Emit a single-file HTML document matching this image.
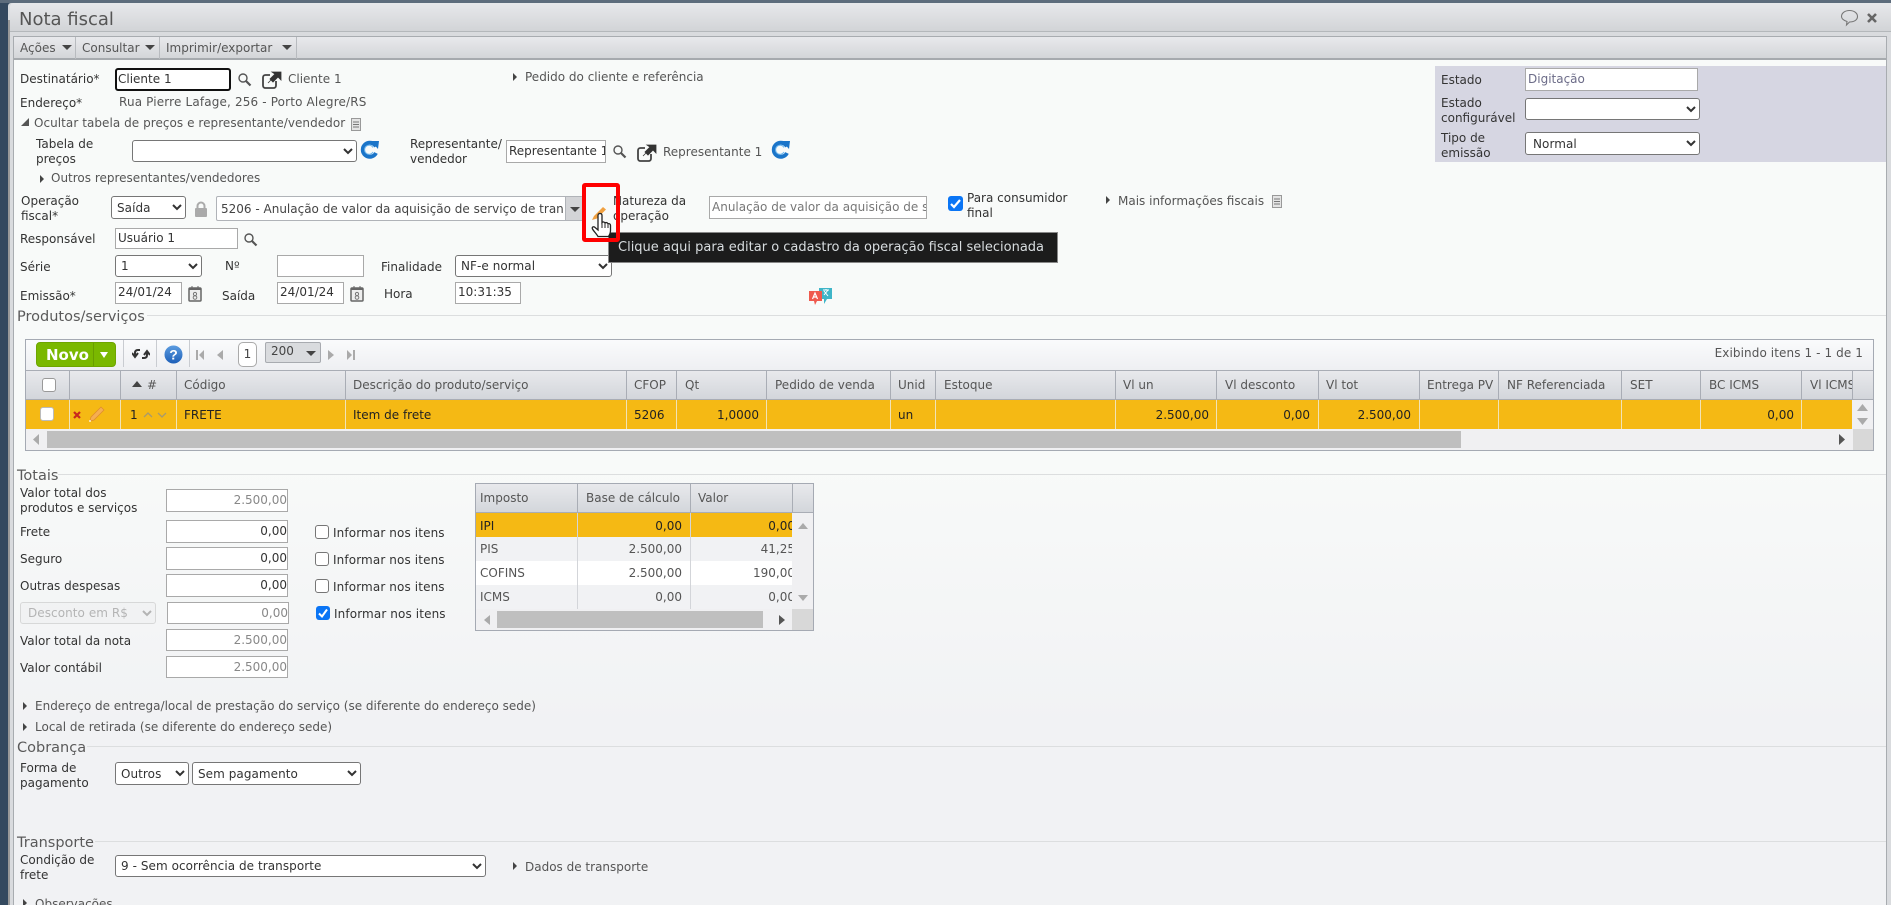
<!DOCTYPE html>
<html lang="pt-BR"><head><meta charset="utf-8"><title>Nota fiscal</title>
<style>
html,body{margin:0;padding:0;width:1891px;height:905px;overflow:hidden;background:#34495f}
#p{position:absolute;left:0;top:0;width:1891px;height:905px;overflow:hidden;font:12px/16px "DejaVu Sans","Liberation Sans",sans-serif;color:#333}
.a,.l,.h,.c,.r,.tr,.td,input,select,svg{position:absolute}
.l,.h,.c,.r{white-space:nowrap}
.l{color:#333}
.h{color:#555;top:377px;height:16px}
.c{color:#222;top:407px}
.r{color:#222;top:407px;text-align:right}
input,select{box-sizing:border-box;margin:0;font:12px "DejaVu Sans","Liberation Sans",sans-serif;color:#333;background:#fff}
input{border:1px solid #a9a9a9;padding:0 0 2px 2px;outline:0}
select{border:1px solid #767676;border-radius:3px;padding:0 0 0 1px;letter-spacing:.06px}
.n{text-align:right;padding:0 0 1px 0}
.tr{width:0;height:0;border-left:4px solid #444;border-top:4px solid transparent;border-bottom:4px solid transparent}
.sec{color:#5a5a5a;font-size:14.500px}
.ln{position:absolute;height:1px;background:#dcdedf}
.sp{position:absolute;width:1px;background:#a9adb5}
.sy{position:absolute;width:1px;background:#f1e3b6}
.cb{position:absolute;box-sizing:border-box;width:14px;height:14px;background:#fff;border:1px solid #767676;border-radius:3px}
</style></head><body>
<div id="p">
<!-- window -->
<div class="a" style="left:0;top:0;width:1891px;height:3px;background:#5d6c7c"></div>
<div class="a" style="left:8px;top:3px;width:1883px;height:902px;background:#d9dbde;border-radius:3px 3px 0 0"></div>
<div class="a" style="left:8px;top:20px;width:2px;height:885px;background:#999"></div>
<div class="a" style="left:10px;top:3px;width:1881px;height:29px;background:linear-gradient(#e7e8eb,#d2d4d7);border-bottom:1px solid #b4b8bb;box-sizing:border-box;border-radius:4px 0 0 0"></div>
<div class="l" style="left:19px;top:9px;font-size:18px;line-height:22px;color:#555">Nota fiscal</div>
<svg style="left:1840px;top:9px" width="20" height="18" viewBox="0 0 20 18"><path d="M9.500 1.500c4.500 0 8 2.500 8 6s-3.500 5.500-8 5.500l-3 3 .5-3.500C4 11.500 1.500 10 1.500 7.500c0-3.500 3.500-6 8-6z" fill="none" stroke="#777" stroke-width="1.100"/></svg>
<svg style="left:1866px;top:12px" width="12" height="12" viewBox="0 0 12 12"><path d="M2 2l8 8M10 2l-8 8" stroke="#666" stroke-width="2.600"/></svg>
<!-- inner panel -->
<div class="a" style="left:13px;top:36px;width:1874px;height:869px;box-sizing:border-box;border:1px solid #a8acb0;border-bottom:0;background:linear-gradient(#f8faf9 0,#f8faf9 420px,#f1f2f4 690px,#f1f2f4 100%)"></div>
<div class="a" style="left:14px;top:37px;width:1872px;height:23px;box-sizing:border-box;background:linear-gradient(#e8e9ec,#d4d6d9);border-bottom:2px solid #a6aaae"></div>
<div class="l" style="left:20px;top:40px;color:#555">Ações</div><div class="a" style="left:62px;top:45px;border:4px solid transparent;border-top:5px solid #444;border-left-width:5px;border-right-width:5px;border-bottom:0"></div>
<div class="sp" style="left:75px;top:37px;height:22px;background:#b8bbbf"></div>
<div class="l" style="left:82px;top:40px;color:#555">Consultar</div><div class="a" style="left:145px;top:45px;border:4px solid transparent;border-top:5px solid #444;border-left-width:5px;border-right-width:5px;border-bottom:0"></div>
<div class="sp" style="left:159px;top:37px;height:22px;background:#b8bbbf"></div>
<div class="l" style="left:166px;top:40px;color:#555">Imprimir/exportar</div><div class="a" style="left:282px;top:45px;border:4px solid transparent;border-top:5px solid #444;border-left-width:5px;border-right-width:5px;border-bottom:0"></div>
<div class="sp" style="left:296px;top:37px;height:22px;background:#b8bbbf"></div>

<!-- header form -->
<div class="l" style="left:20px;top:71px">Destinatário*</div>
<input value="Cliente 1" style="left:115px;top:68px;width:116px;height:23px;border:2px solid #111;border-radius:3px;padding:0 0 2px 1px">
<svg style="left:237px;top:72px" width="15" height="15" viewBox="0 0 15 15"><circle cx="6" cy="6" r="4" fill="none" stroke="#555" stroke-width="1.400"/><path d="M9 9l4.500 4.500" stroke="#555" stroke-width="2.200"/></svg>
<svg style="left:262px;top:71px" width="20" height="18" viewBox="0 0 20 18"><path d="M8 4H3.500C2 4 1 5 1 6.500v8C1 16 2 17 3.500 17h8c1.500 0 2.500-1 2.500-2.500V10" fill="none" stroke="#444" stroke-width="1.800"/><path d="M6 12l8-8M10 1h9v8l-3-3-5 5-3-3 5-5z" fill="#333" stroke="#333" stroke-width=".8"/></svg>
<div class="l" style="left:288px;top:71px;color:#555">Cliente 1</div>
<div class="tr" style="left:513px;top:73px"></div><div class="l" style="left:525px;top:69px;color:#555">Pedido do cliente e referência</div>

<div class="l" style="left:20px;top:95px">Endereço*</div>
<div class="l" style="left:119px;top:94px;color:#555;letter-spacing:.15px">Rua Pierre Lafage, 256 - Porto Alegre/RS</div>

<svg style="left:21px;top:118px" width="8" height="8"><path d="M8 0v8H0z" fill="#555"/></svg>
<div class="l" style="left:34px;top:115px;color:#555;letter-spacing:.05px">Ocultar tabela de preços e representante/vendedor</div>
<svg style="left:350px;top:118px" width="12" height="13" viewBox="0 0 12 13"><path d="M1.500 .5h9v12h-9z" fill="#e4e4e4" stroke="#999"/><path d="M3 4h6M3 6.500h6M3 9h6" stroke="#777"/></svg>

<div class="l" style="left:36px;top:136px">Tabela de</div><div class="l" style="left:36px;top:151px">preços</div>
<select style="left:132px;top:140px;width:225px;height:22px"><option></option></select>
<svg style="left:360px;top:140px" width="19" height="19" viewBox="0 0 19 19"><path d="M16 6.500A7 7 0 1 0 16 13" fill="none" stroke="#1b75c9" stroke-width="4"/><path d="M11 1l8 0-1 8z" fill="#1b75c9"/><path d="M13 7.500A4.500 4.500 0 1 0 13 12" fill="none" stroke="#6fb7ee" stroke-width="1"/></svg>
<div class="l" style="left:410px;top:136px">Representante/</div><div class="l" style="left:410px;top:151px">vendedor</div>
<input value="Representante 1" style="left:506px;top:140px;width:100px;height:23px">
<svg style="left:612px;top:144px" width="15" height="15" viewBox="0 0 15 15"><circle cx="6" cy="6" r="4" fill="none" stroke="#555" stroke-width="1.400"/><path d="M9 9l4.500 4.500" stroke="#555" stroke-width="2.200"/></svg>
<svg style="left:637px;top:144px" width="20" height="18" viewBox="0 0 20 18"><path d="M8 4H3.500C2 4 1 5 1 6.500v8C1 16 2 17 3.500 17h8c1.500 0 2.500-1 2.500-2.500V10" fill="none" stroke="#444" stroke-width="1.800"/><path d="M6 12l8-8M10 1h9v8l-3-3-5 5-3-3 5-5z" fill="#333" stroke="#333" stroke-width=".8"/></svg>
<div class="l" style="left:663px;top:144px;color:#555">Representante 1</div>
<svg style="left:771px;top:140px" width="19" height="19" viewBox="0 0 19 19"><path d="M16 6.500A7 7 0 1 0 16 13" fill="none" stroke="#1b75c9" stroke-width="4"/><path d="M11 1l8 0-1 8z" fill="#1b75c9"/><path d="M13 7.500A4.500 4.500 0 1 0 13 12" fill="none" stroke="#6fb7ee" stroke-width="1"/></svg>

<div class="tr" style="left:40px;top:175px"></div><div class="l" style="left:51px;top:170px;color:#555">Outros representantes/vendedores</div>

<div class="l" style="left:21px;top:193px">Operação</div><div class="l" style="left:21px;top:208px">fiscal*</div>
<select style="left:111px;top:196px;width:75px;height:23px"><option>Saída</option></select>
<svg style="left:194px;top:201px" width="14" height="16" viewBox="0 0 14 16"><path d="M3.500 7V5a3.500 3.500 0 0 1 7 0v2" fill="none" stroke="#aaa" stroke-width="2"/><rect x="1" y="7" width="12" height="9" rx="1" fill="#aaa"/></svg>
<div class="a" style="left:216px;top:196px;width:367px;height:25px;box-sizing:border-box;background:#fff;border:1px solid #b0b3b8;border-radius:2px"></div>
<div class="a" style="left:565px;top:197px;width:18px;height:23px;background:#d3d4d7;border-left:1px solid #b0b3b8;box-sizing:border-box"></div>
<div class="a" style="left:570px;top:207px;border:4px solid transparent;border-top:5px solid #444;border-left-width:5px;border-right-width:5px;border-bottom:0"></div>
<div class="l" style="left:221px;top:201px;width:343px;overflow:hidden;color:#444">5206 - Anulação de valor da aquisição de serviço de transporte</div>

<div class="l" style="left:613px;top:193px">Natureza da</div><div class="l" style="left:613px;top:208px">operação</div>
<input value="Anulação de valor da aquisição de serviço" style="left:709px;top:196px;width:218px;height:23px;color:#777">
<div class="cb" style="left:948px;top:196px;width:15px;height:15px;background:#0a75f5;border:0"></div>
<svg style="left:948px;top:196px" width="15" height="15" viewBox="0 0 15 15"><path d="M3 8l3 3 6-7" fill="none" stroke="#fff" stroke-width="2.200"/></svg>
<div class="l" style="left:967px;top:190px">Para consumidor</div><div class="l" style="left:967px;top:205px">final</div>
<div class="tr" style="left:1106px;top:196px"></div><div class="l" style="left:1118px;top:193px;color:#555">Mais informações fiscais</div>
<svg style="left:1271px;top:195px" width="12" height="13" viewBox="0 0 12 13"><path d="M1.500 .5h9v12h-9z" fill="#e4e4e4" stroke="#999"/><path d="M3 4h6M3 6.500h6M3 9h6" stroke="#777"/></svg>

<div class="l" style="left:20px;top:231px">Responsável</div>
<input value="Usuário 1" style="left:115px;top:228px;width:123px;height:21px">
<svg style="left:243px;top:232px" width="15" height="15" viewBox="0 0 15 15"><circle cx="6" cy="6" r="4" fill="none" stroke="#555" stroke-width="1.400"/><path d="M9 9l4.500 4.500" stroke="#555" stroke-width="2.200"/></svg>

<div class="l" style="left:20px;top:259px">Série</div>
<select style="left:115px;top:255px;width:87px;height:22px"><option>1</option></select>
<div class="l" style="left:225px;top:258px">Nº</div>
<input style="left:277px;top:255px;width:87px;height:22px">
<div class="l" style="left:381px;top:259px">Finalidade</div>
<select style="left:455px;top:255px;width:157px;height:22px"><option>NF-e normal</option></select>

<div class="l" style="left:20px;top:288px">Emissão*</div>
<input value="24/01/24" style="left:115px;top:282px;width:67px;height:22px">
<svg style="left:188px;top:286px" width="14" height="16" viewBox="0 0 14 16"><rect x="1" y="2" width="12" height="13" rx="1" fill="#eee" stroke="#666" stroke-width="1.500"/><path d="M1 2h12v2H1z" fill="#666"/><path d="M4 0v3M10 0v3" stroke="#666"/><circle cx="7" cy="8" r="1.600" fill="none" stroke="#777"/><circle cx="7" cy="11.500" r="1.800" fill="none" stroke="#777"/></svg>
<div class="l" style="left:222px;top:288px">Saída</div>
<input value="24/01/24" style="left:277px;top:282px;width:67px;height:22px">
<svg style="left:350px;top:286px" width="14" height="16" viewBox="0 0 14 16"><rect x="1" y="2" width="12" height="13" rx="1" fill="#eee" stroke="#666" stroke-width="1.500"/><path d="M1 2h12v2H1z" fill="#666"/><path d="M4 0v3M10 0v3" stroke="#666"/><circle cx="7" cy="8" r="1.600" fill="none" stroke="#777"/><circle cx="7" cy="11.500" r="1.800" fill="none" stroke="#777"/></svg>
<div class="l" style="left:384px;top:286px">Hora</div>
<input value="10:31:35" style="left:455px;top:282px;width:66px;height:22px">
<svg style="left:808px;top:287px" width="25" height="19" viewBox="0 0 25 19"><path d="M11 1h13v11h-5l-3 5v-5h-5z" fill="#3fb5c8"/><path d="M1 4h13v10H9l-2 4-1-4H1z" fill="#ef5a4e"/><path d="M4.500 12l2.500-6 2.500 6M5.500 10h3" fill="none" stroke="#fff" stroke-width="1.200"/><path d="M15 3h6M18 2v1M16 8l4-5M16 4l4 5" fill="none" stroke="#fff" stroke-width="1"/></svg>

<!-- Estado panel -->
<div class="a" style="left:1435px;top:66px;width:451px;height:96px;background:#d6d6e2"></div>
<div class="l" style="left:1441px;top:72px">Estado</div>
<input value="Digitação" style="left:1525px;top:68px;width:173px;height:23px;color:#6c6c88">
<div class="l" style="left:1441px;top:95px">Estado</div><div class="l" style="left:1441px;top:110px">configurável</div>
<select style="left:1525px;top:98px;width:175px;height:22px"><option></option></select>
<div class="l" style="left:1441px;top:130px">Tipo de</div><div class="l" style="left:1441px;top:145px">emissão</div>
<select style="left:1525px;top:132px;width:175px;height:23px;padding-left:3px"><option>Normal</option></select>

<!-- Produtos -->
<div class="l sec" style="left:17px;top:309px">Produtos/serviços</div>
<div class="ln" style="left:147px;top:315px;width:1739px"></div>
<div class="a" style="left:25px;top:339px;width:1849px;height:112px;box-sizing:border-box;border:1px solid #a5aab3;background:#f0f0f2"></div>
<div class="a" style="left:26px;top:340px;width:1847px;height:30px;background:linear-gradient(#fafbfc,#eeeff2)"></div>
<div class="a" style="left:36px;top:342px;width:80px;height:25px;background:#7ab800;border-radius:4px;border:1px solid #6ea500;box-sizing:border-box"></div>
<div class="a" style="left:93px;top:343px;width:1px;height:23px;background:#699e00"></div>
<div class="l" style="left:46px;top:347px;font-weight:bold;font-size:15px;color:#fff">Novo</div>
<div class="a" style="left:100px;top:352px;border:4px solid transparent;border-top:6px solid #fff;border-bottom:0"></div>
<div class="sp" style="left:123px;top:340px;height:27px;background:#c9ccd1"></div>
<svg style="left:132px;top:346px" width="18" height="16" viewBox="0 0 18 16"><path d="M8 4H6C4 4 3 5 3 7v3M0 7l3 4 3-4M10 12h2c2 0 3-1 3-3V6M12 9l3-4 3 4" fill="none" stroke="#333" stroke-width="2"/></svg>
<div class="sp" style="left:156px;top:340px;height:27px;background:#c9ccd1"></div>
<svg style="left:164px;top:345px" width="19" height="19" viewBox="0 0 19 19"><defs><linearGradient id="hg" x1="0" y1="0" x2="0" y2="1"><stop offset="0" stop-color="#5b9ce0"/><stop offset="1" stop-color="#1d5fb8"/></linearGradient></defs><circle cx="9.500" cy="9.500" r="9" fill="url(#hg)"/><text x="9.500" y="14.500" text-anchor="middle" fill="#fff" font-family="Liberation Sans, sans-serif" font-weight="bold" font-size="14">?</text></svg>
<div class="sp" style="left:189px;top:340px;height:27px;background:#c9ccd1"></div>
<svg style="left:196px;top:349px" width="8" height="12" viewBox="0 0 8 12"><path d="M1 1v10" stroke="#aaa" stroke-width="2"/><path d="M8 1v10L3 6z" fill="#aaa"/></svg>
<svg style="left:217px;top:349px" width="6" height="12" viewBox="0 0 6 12"><path d="M6 1v10L0 6z" fill="#aaa"/></svg>
<div class="a" style="left:238px;top:342px;width:19px;height:25px;box-sizing:border-box;background:#fff;border:1px solid #aaa;border-radius:5px;text-align:center;line-height:23px;color:#444">1</div>
<div class="a" style="left:265px;top:342px;width:56px;height:21px;box-sizing:border-box;background:#d9dbde;border:1px solid #a8abb0;border-radius:2px;line-height:17px;padding-left:5px;color:#444">200</div>
<div class="a" style="left:306px;top:351px;border:5px solid transparent;border-top:5px solid #444;border-left-width:5px;border-right-width:5px;border-bottom:0"></div>
<svg style="left:328px;top:349px" width="6" height="12" viewBox="0 0 6 12"><path d="M0 1v10l6-5z" fill="#aaa"/></svg>
<svg style="left:347px;top:349px" width="8" height="12" viewBox="0 0 8 12"><path d="M0 1v10l5-5z" fill="#aaa"/><path d="M7 1v10" stroke="#aaa" stroke-width="2"/></svg>
<div class="a" style="left:1660px;top:345px;width:203px;text-align:right;color:#555;letter-spacing:.1px">Exibindo itens 1 - 1 de 1</div>

<!-- grid header -->
<div class="a" style="left:26px;top:370px;width:1847px;height:30px;box-sizing:border-box;background:linear-gradient(#e8e9ec,#d3d6db);border-top:1px solid #a9adb5;border-bottom:1px solid #a9adb5"></div>
<div class="sp" style="left:69px;top:371px;height:29px"></div><div class="sp" style="left:120px;top:371px;height:29px"></div><div class="sp" style="left:176px;top:371px;height:29px"></div><div class="sp" style="left:345px;top:371px;height:29px"></div><div class="sp" style="left:626px;top:371px;height:29px"></div><div class="sp" style="left:676px;top:371px;height:29px"></div><div class="sp" style="left:766px;top:371px;height:29px"></div><div class="sp" style="left:890px;top:371px;height:29px"></div><div class="sp" style="left:935px;top:371px;height:29px"></div><div class="sp" style="left:1115px;top:371px;height:29px"></div><div class="sp" style="left:1216px;top:371px;height:29px"></div><div class="sp" style="left:1318px;top:371px;height:29px"></div><div class="sp" style="left:1419px;top:371px;height:29px"></div><div class="sp" style="left:1498px;top:371px;height:29px"></div><div class="sp" style="left:1621px;top:371px;height:29px"></div><div class="sp" style="left:1700px;top:371px;height:29px"></div><div class="sp" style="left:1801px;top:371px;height:29px"></div><div class="sp" style="left:1852px;top:371px;height:29px"></div>
<div class="cb" style="left:42px;top:378px;border-color:#999"></div>
<div class="a" style="left:132px;top:381px;border:5px solid transparent;border-bottom:6px solid #444;border-top:0"></div>
<div class="h" style="left:147px">#</div>
<div class="h" style="left:184px">Código</div><div class="h" style="left:353px">Descrição do produto/serviço</div><div class="h" style="left:634px">CFOP</div><div class="h" style="left:685px">Qt</div><div class="h" style="left:775px">Pedido de venda</div><div class="h" style="left:898px">Unid</div><div class="h" style="left:944px">Estoque</div><div class="h" style="left:1123px">Vl un</div><div class="h" style="left:1225px">Vl desconto</div><div class="h" style="left:1326px">Vl tot</div><div class="h" style="left:1427px">Entrega PV</div><div class="h" style="left:1507px">NF Referenciada</div><div class="h" style="left:1630px">SET</div><div class="h" style="left:1709px">BC ICMS</div><div class="h" style="left:1810px;width:42px;overflow:hidden">Vl ICMS</div>
<!-- row -->
<div class="a" style="left:26px;top:400px;width:1826px;height:29px;background:#f5b914"></div>
<div class="sy" style="left:69px;top:400px;height:29px"></div><div class="sy" style="left:120px;top:400px;height:29px"></div><div class="sy" style="left:176px;top:400px;height:29px"></div><div class="sy" style="left:345px;top:400px;height:29px"></div><div class="sy" style="left:626px;top:400px;height:29px"></div><div class="sy" style="left:676px;top:400px;height:29px"></div><div class="sy" style="left:766px;top:400px;height:29px"></div><div class="sy" style="left:890px;top:400px;height:29px"></div><div class="sy" style="left:935px;top:400px;height:29px"></div><div class="sy" style="left:1115px;top:400px;height:29px"></div><div class="sy" style="left:1216px;top:400px;height:29px"></div><div class="sy" style="left:1318px;top:400px;height:29px"></div><div class="sy" style="left:1419px;top:400px;height:29px"></div><div class="sy" style="left:1498px;top:400px;height:29px"></div><div class="sy" style="left:1621px;top:400px;height:29px"></div><div class="sy" style="left:1700px;top:400px;height:29px"></div><div class="sy" style="left:1801px;top:400px;height:29px"></div>
<div class="cb" style="left:40px;top:407px;border-color:#bbb"></div>
<svg style="left:73px;top:411px" width="8" height="8" viewBox="0 0 8 8"><path d="M1 1l6 6M7 1L1 7" stroke="#c8281e" stroke-width="2.200"/></svg>
<svg style="left:88px;top:406px" width="17" height="16" viewBox="0 0 17 16"><path d="M3 11L13 1l3 3L6 14l-4 1z" fill="#f5ae52" stroke="#de8a2c" stroke-width=".7"/><path d="M1 15h2" stroke="#fff" stroke-width="1.200"/></svg>
<div class="c" style="left:130px">1</div>
<svg style="left:143px;top:412px" width="10" height="6" viewBox="0 0 10 6"><path d="M1 5l4-4 4 4" fill="none" stroke="#a79a6e" stroke-width="1.300"/></svg>
<svg style="left:157px;top:412px" width="10" height="6" viewBox="0 0 10 6"><path d="M1 1l4 4 4-4" fill="none" stroke="#a79a6e" stroke-width="1.300"/></svg>
<div class="c" style="left:184px">FRETE</div><div class="c" style="left:353px">Item de frete</div><div class="c" style="left:634px">5206</div>
<div class="r" style="left:680px;width:79px">1,0000</div>
<div class="c" style="left:898px">un</div>
<div class="r" style="left:1120px;width:89px">2.500,00</div>
<div class="r" style="left:1220px;width:90px">0,00</div>
<div class="r" style="left:1322px;width:89px">2.500,00</div>
<div class="r" style="left:1705px;width:89px">0,00</div>
<!-- scrollbars -->
<div class="a" style="left:47px;top:431px;width:1414px;height:17px;background:#bfbfbf"></div>
<svg style="left:33px;top:434px" width="6" height="11" viewBox="0 0 6 11"><path d="M6 0v11L0 5.500z" fill="#aaa"/></svg>
<svg style="left:1839px;top:434px" width="6" height="11" viewBox="0 0 6 11"><path d="M0 0v11l6-5.500z" fill="#555"/></svg>
<div class="a" style="left:1853px;top:429px;width:20px;height:21px;background:#d8d8d8"></div>
<svg style="left:1857px;top:404px" width="11" height="7" viewBox="0 0 11 7"><path d="M0 7l5.500-7L11 7z" fill="#aaa"/></svg>
<svg style="left:1857px;top:418px" width="11" height="7" viewBox="0 0 11 7"><path d="M0 0l5.500 7L11 0z" fill="#aaa"/></svg>

<!-- Totais -->
<div class="l sec" style="left:17px;top:468px">Totais</div>
<div class="ln" style="left:58px;top:474px;width:1828px"></div>
<div class="l" style="left:20px;top:485px">Valor total dos</div><div class="l" style="left:20px;top:500px">produtos e serviços</div>
<input class="n" value="2.500,00" style="left:166px;top:489px;width:122px;height:23px;color:#888">
<div class="l" style="left:20px;top:524px">Frete</div>
<input class="n" value="0,00" style="left:166px;top:520px;width:122px;height:23px">
<div class="l" style="left:20px;top:551px">Seguro</div>
<input class="n" value="0,00" style="left:166px;top:547px;width:122px;height:23px">
<div class="l" style="left:20px;top:578px">Outras despesas</div>
<input class="n" value="0,00" style="left:166px;top:574px;width:122px;height:23px">
<select disabled style="left:20px;top:602px;width:136px;height:22px;background:#f0f2f3;border-color:#ccc;color:#999;padding-left:3px"><option>Desconto em R$</option></select>
<input class="n" value="0,00" style="left:167px;top:602px;width:122px;height:22px;color:#888">
<div class="l" style="left:20px;top:633px">Valor total da nota</div>
<input class="n" value="2.500,00" style="left:166px;top:629px;width:122px;height:22px;color:#888">
<div class="l" style="left:20px;top:660px">Valor contábil</div>
<input class="n" value="2.500,00" style="left:166px;top:656px;width:122px;height:22px;color:#888">
<div class="cb" style="left:315px;top:525px"></div><div class="l" style="left:333px;top:525px;letter-spacing:.12px">Informar nos itens</div>
<div class="cb" style="left:315px;top:552px"></div><div class="l" style="left:333px;top:552px;letter-spacing:.12px">Informar nos itens</div>
<div class="cb" style="left:315px;top:579px"></div><div class="l" style="left:333px;top:579px;letter-spacing:.12px">Informar nos itens</div>
<div class="cb" style="left:316px;top:606px;background:#0a75f5;border:0"></div>
<svg style="left:316px;top:606px" width="14" height="14" viewBox="0 0 14 14"><path d="M3 7.500l3 3 5-7" fill="none" stroke="#fff" stroke-width="2"/></svg>
<div class="l" style="left:334px;top:606px;letter-spacing:.12px">Informar nos itens</div>

<!-- tax grid -->
<div class="a" style="left:475px;top:483px;width:339px;height:148px;box-sizing:border-box;border:1px solid #a5aab3;background:#f0f0f2"></div>
<div class="a" style="left:476px;top:484px;width:337px;height:29px;box-sizing:border-box;background:linear-gradient(#e8e9ec,#d3d6db);border-bottom:1px solid #a9adb5"></div>
<div class="a" style="left:476px;top:513px;width:316px;height:24px;background:#f5b914"></div>
<div class="a" style="left:476px;top:537px;width:316px;height:24px;background:#f1f2f4"></div>
<div class="a" style="left:476px;top:561px;width:316px;height:24px;background:#fff"></div>
<div class="a" style="left:476px;top:585px;width:316px;height:24px;background:#f1f2f4"></div>
<div class="sp" style="left:577px;top:484px;height:29px"></div><div class="sp" style="left:690px;top:484px;height:29px"></div><div class="sp" style="left:792px;top:484px;height:29px"></div>
<div class="sp" style="left:577px;top:513px;height:96px;background:#d3d5d9"></div><div class="sp" style="left:690px;top:513px;height:96px;background:#d3d5d9"></div>
<div class="l" style="left:480px;top:490px;color:#555">Imposto</div><div class="l" style="left:586px;top:490px;color:#555">Base de cálculo</div><div class="l" style="left:698px;top:490px;color:#555">Valor</div>
<div class="l" style="left:480px;top:518px;color:#222">IPI</div><div class="r" style="left:580px;top:518px;width:102px">0,00</div><div class="a" style="left:692px;top:518px;width:100px;height:16px;overflow:hidden;white-space:nowrap;color:#222;padding-left:0"><span style="position:absolute;right:-3px">0,00</span></div>
<div class="l" style="left:480px;top:541px;color:#555">PIS</div><div class="r" style="left:580px;top:541px;width:102px;color:#555">2.500,00</div><div class="a" style="left:692px;top:541px;width:100px;height:16px;overflow:hidden;white-space:nowrap;color:#555"><span style="position:absolute;right:-3px">41,25</span></div>
<div class="l" style="left:480px;top:565px;color:#555">COFINS</div><div class="r" style="left:580px;top:565px;width:102px;color:#555">2.500,00</div><div class="a" style="left:692px;top:565px;width:100px;height:16px;overflow:hidden;white-space:nowrap;color:#555"><span style="position:absolute;right:-3px">190,00</span></div>
<div class="l" style="left:480px;top:589px;color:#555">ICMS</div><div class="r" style="left:580px;top:589px;width:102px;color:#555">0,00</div><div class="a" style="left:692px;top:589px;width:100px;height:16px;overflow:hidden;white-space:nowrap;color:#555"><span style="position:absolute;right:-3px">0,00</span></div>
<div class="a" style="left:497px;top:611px;width:266px;height:17px;background:#bfbfbf"></div>
<svg style="left:484px;top:615px" width="6" height="10" viewBox="0 0 6 10"><path d="M6 0v10L0 5z" fill="#aaa"/></svg>
<svg style="left:779px;top:615px" width="6" height="10" viewBox="0 0 6 10"><path d="M0 0v10l6-5z" fill="#555"/></svg>
<div class="a" style="left:792px;top:609px;width:21px;height:21px;background:#d8d8d8"></div>
<svg style="left:798px;top:523px" width="10" height="6" viewBox="0 0 10 6"><path d="M0 6l5-6 5 6z" fill="#aaa"/></svg>
<svg style="left:798px;top:595px" width="10" height="6" viewBox="0 0 10 6"><path d="M0 0l5 6 5-6z" fill="#aaa"/></svg>

<!-- Lower -->
<div class="tr" style="left:23px;top:702px"></div><div class="l" style="left:35px;top:698px;color:#555">Endereço de entrega/local de prestação do serviço (se diferente do endereço sede)</div>
<div class="tr" style="left:23px;top:723px"></div><div class="l" style="left:35px;top:719px;color:#555">Local de retirada (se diferente do endereço sede)</div>
<div class="l sec" style="left:17px;top:740px">Cobrança</div>
<div class="ln" style="left:87px;top:746px;width:1799px"></div>
<div class="l" style="left:20px;top:760px">Forma de</div><div class="l" style="left:20px;top:775px">pagamento</div>
<select style="left:115px;top:762px;width:74px;height:23px"><option>Outros</option></select>
<select style="left:192px;top:762px;width:169px;height:23px"><option>Sem pagamento</option></select>
<div class="l sec" style="left:17px;top:835px">Transporte</div>
<div class="ln" style="left:95px;top:841px;width:1791px"></div>
<div class="l" style="left:20px;top:852px">Condição de</div><div class="l" style="left:20px;top:867px">frete</div>
<select style="left:115px;top:855px;width:371px;height:22px"><option>9 - Sem ocorrência de transporte</option></select>
<div class="tr" style="left:513px;top:862px"></div><div class="l" style="left:525px;top:859px;color:#555">Dados de transporte</div>
<div class="tr" style="left:23px;top:899px"></div><div class="l" style="left:35px;top:896px;color:#555">Observações</div>

<!-- tooltip and highlight -->
<svg style="left:591px;top:206px" width="16" height="15" viewBox="0 0 16 15"><path d="M1 14l2-4 9-9 3 2.500-9 9z" fill="#f0a040"/></svg>
<div class="a" style="left:608px;top:232px;width:450px;height:31px;box-sizing:border-box;background:#1c1c1c;border:1px solid #888;line-height:29px;padding-left:9px;color:#d8dde0;white-space:nowrap;font-size:13px">Clique aqui para editar o cadastro da operação fiscal selecionada</div>
<div class="a" style="left:582px;top:183px;width:38px;height:59px;box-sizing:border-box;border:4px solid #f00;border-radius:3px"></div>
<svg style="left:591px;top:212px" width="23" height="27" viewBox="0 0 23 27"><path d="M9 1.500c1.200 0 2 .8 2 2v7c.6-.8 2.600-.8 3 .5.800-.8 2.500-.5 3 .8.900-.5 2.500 0 2.500 1.700v5c0 3-1 4.500-2 6H7c-1-2-4-5-5.500-7.500-.8-1.500.5-2.800 2-2l3.500 3V3.500c0-1.200.8-2 2-2z" fill="#fff" stroke="#222" stroke-width="1.300"/><path d="M11 11v5M14 11.500V16M17 12.500V16" stroke="#222" stroke-width="1"/></svg>
</div>
</body></html>
